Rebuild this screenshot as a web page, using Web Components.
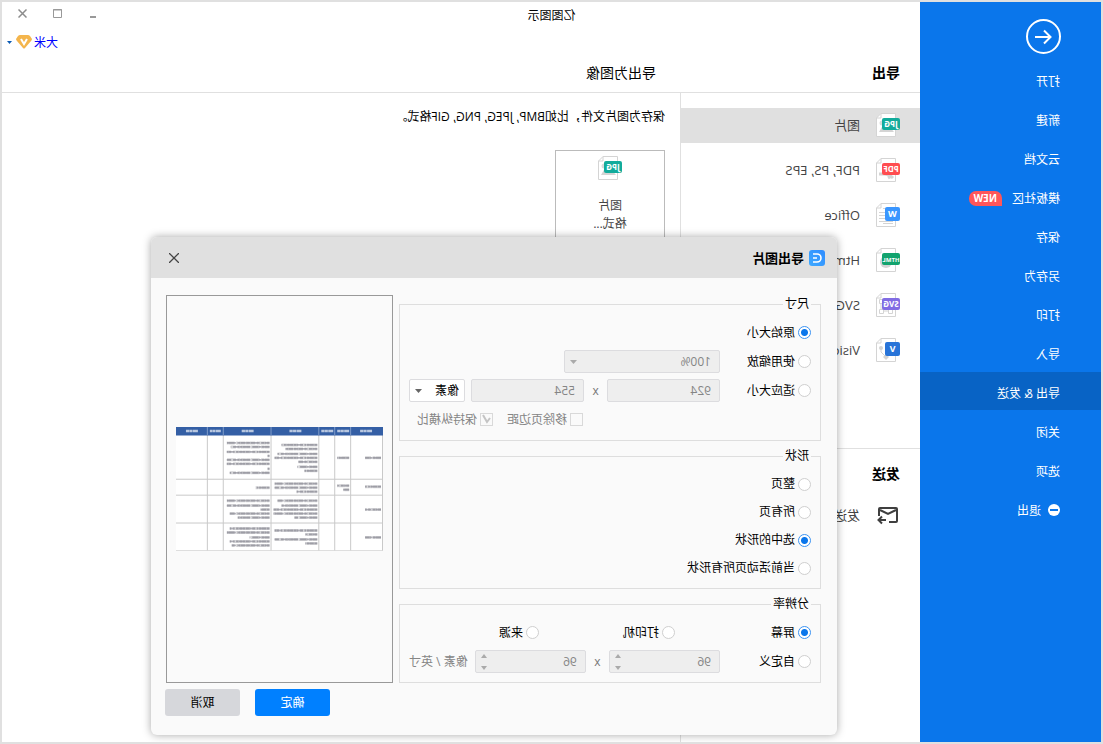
<!DOCTYPE html>
<html lang="zh-CN">
<head>
<meta charset="utf-8">
<title>亿图图示</title>
<style>
  html, body { margin: 0; height: 100%; }
  body {
    font: 12px/18px "Open Sans", "Noto Sans CJK SC", sans-serif;
    color: #000;
    background: #fff;
    overflow: hidden;
  }
</style>
</head>
<body>
<app-window></app-window>

<script>
const define = (name, css, html, setup) => {
  const tpl = document.createElement('template');
  tpl.innerHTML = `<style>*{box-sizing:border-box}svg{display:block}${css}</style>${html}`;
  customElements.define(name, class extends HTMLElement {
    connectedCallback() {
      if (this.shadowRoot) return;
      const root = this.attachShadow({ mode: 'open' });
      const content = tpl.content.cloneNode(true);
      if (setup) setup(this, content);
      root.append(content);
    }
  });
};

/* ---------- file-type icons ---------- */
const sheet = '<path d="M4.500.5H19L23.500 5V23.500H4.500Z" fill="#fff" stroke="#d4d4d4"/><path d="M19 .5V5H23.500" fill="none" stroke="#d4d4d4"/>';
const badge = (color, text) => `<rect y="5" width="18" height="12" rx="2" fill="${color}"/><text x="9" y="14" font-size="${text.length > 3 ? 6 : 8}" font-weight="700" text-anchor="middle" fill="#fff">${text}</text>`;
const tile = (color, text) => `<rect y="4" width="15" height="14" rx="2" fill="${color}"/><text x="7.500" y="14" font-size="9" font-weight="700" text-anchor="middle" fill="#fff">${text}</text>`;
const icons = {
  jpg: sheet + '<circle cx="18" cy="10" r="2.500" fill="#dadada"/><path d="M6 19l5-6 3 3 3-4 4 7z" fill="#d4d4d4"/>' + badge('#12ab9b', 'JPG'),
  pdf: sheet + '<path d="M7 20c3-3 6-4 9-4h5M8 18l4 2" fill="none" stroke="#d4d4d4" stroke-width="3"/>' + badge('#ff4d50', 'PDF'),
  office: sheet + '<path d="M9 5.500h8M15 9.500h6M15 12.500h6M15 15.500h6M7 18.500h14M7 20.500h10" stroke="#d4d4d4"/>' + tile('#3a96ff', 'W'),
  html: sheet + '<circle cx="14" cy="14" r="6" fill="#d4d4d4"/>' + badge('#12a36e', 'HTML'),
  svg: sheet + '<path d="M9 8h10v10H9z" fill="none" stroke="#d4d4d4"/><path d="M7.500 16.500h4v4h-4zM16.500 16.500h4v4h-4zM16.500 6.500h4v4h-4z" fill="#fff" stroke="#d4d4d4"/>' + badge('#816ce3', 'SVG'),
  visio: sheet + '<path d="M19 9v5l-5 5" fill="none" stroke="#d4d4d4"/><circle cx="19" cy="10" r="2" fill="#d4d4d4"/><path d="M11 19l3-3 3 3-3 3z" fill="#d4d4d4"/>' + tile('#2874d8', 'V'),
  send: '<g fill="none" stroke="#3f3f3f" stroke-width="2"><path d="M11 19H4Q3 19 3 18V6Q3 5 4 5H20Q21 5 21 6V13"/><path d="M4 7l8 4 8-4"/><path d="M14 17h7M18 13.500l3.500 3.500-3.500 3.500"/></g>'
};
define('file-icon', ':host{display:block;width:24px;height:24px;flex:none}', '<svg width="24" height="24" viewBox="0 0 24 24" aria-hidden="true"></svg>',
  (el, root) => { root.querySelector('svg').innerHTML = icons[el.getAttribute('kind')]; });

/* ---------- left navigation ---------- */
define('nav-item', `
  :host{display:block}
  a{display:flex;align-items:center;height:38px;padding:6px 0 0 41px;color:#fff;text-decoration:none;white-space:nowrap}
  :host([active]) a{background:#0863c5}
`, '<a href="#"><slot></slot></a>');

define('side-nav', `
  :host{display:flex;flex-direction:column;gap:1px;background:#0a76eb;padding-top:17px}
  button{display:block;width:35px;height:35px;padding:0;margin:0 0 5px 40px;border:0;background:none}
  .new{margin:0 0 2px 10px;height:15px;padding:0 5px;border-radius:7px 7px 7px 0;background:#ff5659;font-size:10px;line-height:15px;font-weight:700}
  .exit{margin:0 7px 2px 0}
`, `
  <button aria-label="返回"><svg width="35" height="35" viewBox="0 0 35 35" fill="none" stroke="#fff" stroke-width="2"><circle cx="17.500" cy="17.500" r="16.500"/><path d="M26 18H11M17 11.500L10.500 18l6.500 6.500"/></svg></button>
  <nav-item>打开</nav-item><nav-item>新建</nav-item><nav-item>云文档</nav-item>
  <nav-item>模板社区<span class="new">NEW</span></nav-item>
  <nav-item>保存</nav-item><nav-item>另存为</nav-item><nav-item>打印</nav-item><nav-item>导入</nav-item>
  <nav-item active>导出 &amp; 发送</nav-item>
  <nav-item>关闭</nav-item><nav-item>选项</nav-item>
  <nav-item><svg class="exit" width="12" height="12" viewBox="0 0 12 12"><circle cx="6" cy="6" r="6" fill="#fff"/><path d="M2 6h8" stroke="#0a76eb" stroke-width="2"/></svg>退出</nav-item>
`);

/* ---------- header ---------- */
define('title-bar', `
  :host{display:block;border-bottom:1px solid #e0e0e0}
  .bar{display:flex;height:26px;align-items:center}
  .name{flex:1;text-align:center;padding-top:2px}
  .controls{width:181px;display:flex;justify-content:flex-end;gap:20px;padding:0 13px 4px 0}
  button{padding:0;border:0;background:none;width:15px;height:15px;display:grid;place-items:center}
  .account{display:flex;justify-content:flex-end;align-items:center;height:28px;padding-right:5px}
  .account a{color:#00f;text-decoration:none;margin-right:2px;padding-top:2px}
  .account svg+svg{margin-left:4px}
  .heads{display:grid;grid-template-columns:240px 1fr;height:36px;align-items:start;font-size:14px}
  h1,h2{font-size:14px;margin:0;line-height:34px}
  h1{padding-left:20px;font-weight:700}
  h2{padding-left:24px;font-weight:400}
`, `
  <div class="bar"><span class="name">亿图图示</span>
    <span class="controls">
      <button aria-label="最小化"><svg width="9" height="9"><path d="M1 8h6" stroke="#999" stroke-width="2"/></svg></button>
      <button aria-label="最大化"><svg width="9" height="9"><path d="M.5.5h8v8h-8zM0 1h9" fill="none" stroke="#999"/></svg></button>
      <button aria-label="关闭"><svg width="9" height="9"><path d="M.5.5l8 8M8.500.5l-8 8" stroke="#8c8c8c" stroke-width="1.500"/></svg></button>
    </span></div>
  <div class="account"><a href="#">大米</a>
    <svg width="16" height="14" viewBox="0 0 16 14"><path d="M4 0h8q1 0 2 1l2 3q0 1-1 2L9 13q-1 1-2 0L1 6Q0 5 0 4l2-3q1-1 2-1z" fill="#f4b54c"/><path d="M5 4l3 5 3-5" fill="none" stroke="#fff" stroke-width="2"/></svg>
    <svg width="5" height="3"><path d="M0 0h5L2.500 3z" fill="#0a5ab4"/></svg></div>
  <div class="heads"><h1>导出</h1><h2>导出为图像</h2></div>
`);

/* ---------- export list ---------- */
define('list-item', `
  :host{display:block;font-size:13px}
  a{display:flex;align-items:center;gap:16px;height:35px;padding:0 0 1px 20px;color:#444;text-decoration:none}
  span{padding-bottom:1px}
  :host([active]) a{background:#e0e0e0}
`, '<a href="#"><file-icon></file-icon><span><slot></slot></span></a>',
  (el, root) => root.querySelector('file-icon').setAttribute('kind', el.getAttribute('kind')));

define('export-list', `
  :host{display:block;border-right:1px solid #e0e0e0;padding-top:15px}
  nav{display:grid;gap:10px}
  section{margin-top:80px;border-top:1px solid #e0e0e0}
  h2{margin:0;padding-left:20px;font-size:14px;line-height:49px}
`, `
  <nav>
    <list-item kind="jpg" active>图片</list-item>
    <list-item kind="pdf">PDF, PS, EPS</list-item>
    <list-item kind="office">Office</list-item>
    <list-item kind="html">Html</list-item>
    <list-item kind="svg">SVG</list-item>
    <list-item kind="visio">Visio</list-item>
  </nav>
  <section><h2>发送</h2><list-item kind="send">发送</list-item></section>
`);

define('export-pane', `
  :host{display:block;padding:15px}
  p{margin:0 0 24px;line-height:18px}
  button{display:flex;flex-direction:column;align-items:center;width:110px;height:110px;padding:5px 0 0;border:1px solid #bbb;background:#fff;font:inherit;color:#444}
  span{margin-top:17px;line-height:18px}
`, `
  <p>保存为图片文件，比如BMP, JPEG, PNG, GIF格式。</p>
  <button><file-icon kind="jpg"></file-icon><span>图片<br>格式...</span></button>
`);

/* ---------- dialog form ---------- */
const formCss = `
  :host{display:block}
  fieldset{margin:0;min-width:0;border:1px solid #dedede;padding:8px 9px 9px}
  legend{padding:0 2px;line-height:18px}
  label{display:flex;align-items:center;white-space:nowrap;gap:3px}
  input,select{font:inherit;margin:0;min-width:0}
  input[type=radio]{appearance:none;width:13px;height:13px;border:1px solid #cfcfcf;border-radius:50%;background:#fff}
  input[type=radio]:checked{border-color:#3b93f2;background:radial-gradient(#0a76eb 3px,#fff 4px)}
  input[type=checkbox]{appearance:none;width:13px;height:13px;border:1px solid #d9d9d9;background:#fafafa}
  input[type=checkbox]:checked{background:url("data:image/svg+xml,%3Csvg xmlns='http://www.w3.org/2000/svg' viewBox='0 0 11 11'%3E%3Cpath d='M2 4l3 4 4-7' fill='none' stroke='%23c4c4c4' stroke-width='2'/%3E%3C/svg%3E")}
  input[type=text],input[type=number],select{appearance:none;width:100%;height:23px;padding:0 8px;border:1px solid #dcdcdf;border-radius:2px;background:#fff;color:#000}
  input[type=number]{appearance:textfield}
  input:disabled[type=text],input:disabled[type=number],select:disabled{background:#eee;color:#858585;opacity:1}
  .pick{display:grid;align-items:center}
  .pick>*{grid-area:1/1}
  .pick svg{justify-self:end;margin-right:6px;pointer-events:none}
  .x{color:#777;text-align:center;line-height:23px}
  .muted{color:#858585}
`;
define('size-group', formCss + `
  .grid{display:grid;grid-template-columns:91px 1fr 23px 1fr 6px 56px;grid-auto-rows:23px;row-gap:6px}
  .grid>label:not(.pick){grid-column-start:1}
  .scale{grid-column:2/5;width:156px}
  .unit{grid-column:6}
  .unit select{padding:0 5px}
  .checks{grid-column:4/-1;display:flex;gap:14px;padding-left:1px}
`, `
  <fieldset><legend>尺寸</legend><div class="grid">
    <label><input type="radio" name="size" checked>原始大小</label>
    <label><input type="radio" name="size">使用缩放</label>
    <div class="pick scale"><select disabled aria-label="缩放"><option>100%</option></select><svg width="7" height="4"><path d="M0 0h7L3.500 4z" fill="#aaa"/></svg></div>
    <label><input type="radio" name="size">适应大小</label>
    <input type="text" value="924" disabled aria-label="宽度"><span class="x">x</span><input type="text" value="554" disabled aria-label="高度">
    <div class="pick unit"><select aria-label="单位"><option>像素</option></select><svg width="7" height="4"><path d="M0 0h7L3.500 4z" fill="#666"/></svg></div>
    <div class="checks muted"><label><input type="checkbox" disabled>移除页边距</label><label><input type="checkbox" checked disabled>保持纵横比</label></div>
  </div></fieldset>
`);
define('shape-group', formCss + '.grid{display:grid;grid-auto-rows:22px;row-gap:6px;justify-items:start}', `
  <fieldset><legend>形状</legend><div class="grid">
    <label><input type="radio" name="shape">整页</label>
    <label><input type="radio" name="shape">所有页</label>
    <label><input type="radio" name="shape" checked>选中的形状</label>
    <label><input type="radio" name="shape">当前活动页所有形状</label>
  </div></fieldset>
`);
define('number-box', formCss + `
  .box{display:grid}
  .box>*{grid-area:1/1}
  .steps{display:flex;flex-direction:column;justify-self:end;justify-content:space-between;padding:3px 6px}
  button{padding:0;border:0;background:none;width:6px;height:5px}
`, `
  <div class="box"><input type="number" value="96" disabled>
    <span class="steps">
      <button disabled aria-label="增加"><svg width="6" height="4"><path d="M0 4h6L3 0z" fill="#aaa"/></svg></button>
      <button disabled aria-label="减少"><svg width="6" height="4"><path d="M0 0h6L3 4z" fill="#aaa"/></svg></button>
    </span></div>
`, (el, root) => root.querySelector('input').setAttribute('aria-label', el.getAttribute('label')));
define('resolution-group', formCss + `
  .sources{display:grid;grid-template-columns:repeat(2,136px) 1fr;height:23px;margin-bottom:6px}
  .custom{display:grid;grid-template-columns:91px 1fr 23px 1fr auto;height:23px}
  .custom .muted{padding-left:7px;line-height:23px}
`, `
  <fieldset><legend>分辨率</legend>
    <div class="sources">
      <label><input type="radio" name="dpi" checked>屏幕</label>
      <label><input type="radio" name="dpi">打印机</label>
      <label><input type="radio" name="dpi">来源</label>
    </div>
    <div class="custom">
      <label><input type="radio" name="dpi">自定义</label>
      <number-box label="水平分辨率"></number-box><span class="x">x</span><number-box label="垂直分辨率"></number-box>
      <span class="muted">像素 / 英寸</span>
    </div>
  </fieldset>
`);

/* ---------- page preview: thumbnail of a table, one dash run per text line [x, y, width] ---------- */
const runs = [
  [2,31,16],[2,60,16],[2,83,16],[2,111,16],[34,31,12],[34,59,12],[34,63,6],
  [66,18,36],[66,22,32],[66,27,40],[66,31,43],[66,35,19],[66,40,20],[66,44,13],
  [66,57,43],[66,61,43],[66,65,21],[66,74,40],[66,79,36],[66,83,44],[66,87,44],[66,91,23],
  [66,104,43],[66,108,12],[66,113,43],[66,117,12],
  [114,16,43],[114,20,39],[114,25,43],[114,29,2],[114,33,43],[114,37,43],[114,42,2],[114,46,40],
  [114,61,14],[114,74,43],[114,79,43],[114,83,9],[114,87,40],[114,91,32],
  [114,102,40],[114,106,43],[114,111,20],[114,115,40],[114,119,38]
];
const heads = [[11,12],[34,12],[50,12],[82,12],[130,12],[163,11],[186,12]];
define('page-preview', `
  :host{display:flex;align-items:center;border:1px solid #999;background:#fafafa;padding:0 9px}
  svg{width:100%;height:auto}
`, '<svg viewBox="0 0 208 125" role="img" aria-label="预览"></svg>', (el, root) => {
  const dash = ['5 .4 3 1.600 9 .5 4 .3', '8 .4 2.500 .4 6 2', '3 .5 7 .4 2 1.500 6 .3'];
  root.querySelector('svg').innerHTML =
    '<path d="M0 8H208V124.500H0z" fill="#fff"/>' +
    '<path d="M0 52.500H208M0 68.500H208M0 96.500H208M0 124.500H208M.5 8V124M32.500 8V124M48.500 8V124M64.500 8V124M112.500 8V124M160.500 8V124M176.500 8V124" stroke="#c9c9c9" fill="none"/>' +
    '<path d="M0 0H208V8.500H0z" fill="#345fa5"/><path d="M32.500 0v8M48.500 0v8M64.500 0v8M112.500 0v8M160.500 0v8M176.500 0v8" stroke="#7f9bc9"/>' +
    runs.map(([x, y, w], i) => `<path d="M${x} ${y}h${w}" stroke="#6f6f7c" stroke-opacity=".3" stroke-width="3" stroke-dasharray="${dash[i % 3]}"/><path d="M${x} ${y}h${w}" stroke="#6f6f7c" stroke-opacity=".55" stroke-width="1.800" stroke-dasharray="${dash[(i + 1) % 3]}"/>`).join('') +
    heads.map(([x, w]) => `<path d="M${x} 4h${w}" stroke="#fff" stroke-opacity=".65" stroke-width="2.400" stroke-dasharray="5 .4 3 .3"/>`).join('');
});

define('export-dialog', `
  :host{display:block;border-radius:6px;background:#fafafa;box-shadow:0 0 8px rgba(0,0,0,.35);overflow:hidden}
  header{display:flex;align-items:center;height:41px;padding:0 16px 0 12px;background:#e0e0e0}
  h2{flex:1;margin:0 0 0 5px;font-size:13px;font-weight:700}
  button{font:inherit;border:0;padding:0}
  .close{display:grid;place-items:center;width:14px;height:14px;background:none}
  .body{display:flex;gap:6px;padding:17px 15px 0 16px}
  .form{flex:1;min-width:0;display:grid;gap:6px}
  page-preview{width:227px}
  footer{display:flex;justify-content:flex-end;gap:15px;padding:6px 14px 19px}
  footer button{width:75px;height:27px;border-radius:3px;background:#d6d7db;color:#000}
  footer .ok{background:#0080ff;color:#fff}
`, `
  <header>
    <svg width="16" height="16" viewBox="0 0 16 16"><defs><linearGradient id="g" x1="0" y1="0" x2="1" y2="1"><stop stop-color="#2f8cff"/><stop offset="1" stop-color="#3fa9ff"/></linearGradient></defs><rect width="16" height="16" rx="3" fill="url(#g)"/><path d="M12 4H8a4 4 0 0 0 0 8h4M8 8h4" fill="none" stroke="#fff" stroke-width="1.600"/></svg>
    <h2>导出图片</h2>
    <button class="close" aria-label="关闭"><svg width="10" height="10"><path d="M0 0l10 10M10 0L0 10" stroke="#444" stroke-width="1.300"/></svg></button>
  </header>
  <div class="body">
    <div class="form"><size-group></size-group><shape-group></shape-group><resolution-group></resolution-group></div>
    <page-preview></page-preview>
  </div>
  <footer><button class="ok">确定</button><button>取消</button></footer>
`);

/* ---------- window: the whole interface is flipped left to right ---------- */
define('app-window', `
  :host{position:relative;display:grid;grid-template-columns:181px 1fr;height:100vh;box-sizing:border-box;border:2px solid #e0e0e0;background:#fff;overflow:hidden;transform:scaleX(-1)}
  main{display:grid;grid-template-rows:auto 1fr;min-width:0}
  .split{display:grid;grid-template-columns:240px 1fr}
  export-dialog{position:absolute;left:264px;right:149px;top:235px}
`, `
  <side-nav></side-nav>
  <main><title-bar></title-bar><div class="split"><export-list></export-list><export-pane></export-pane></div></main>
  <export-dialog role="dialog" aria-label="导出图片"></export-dialog>
`);
</script>
</body>
</html>
